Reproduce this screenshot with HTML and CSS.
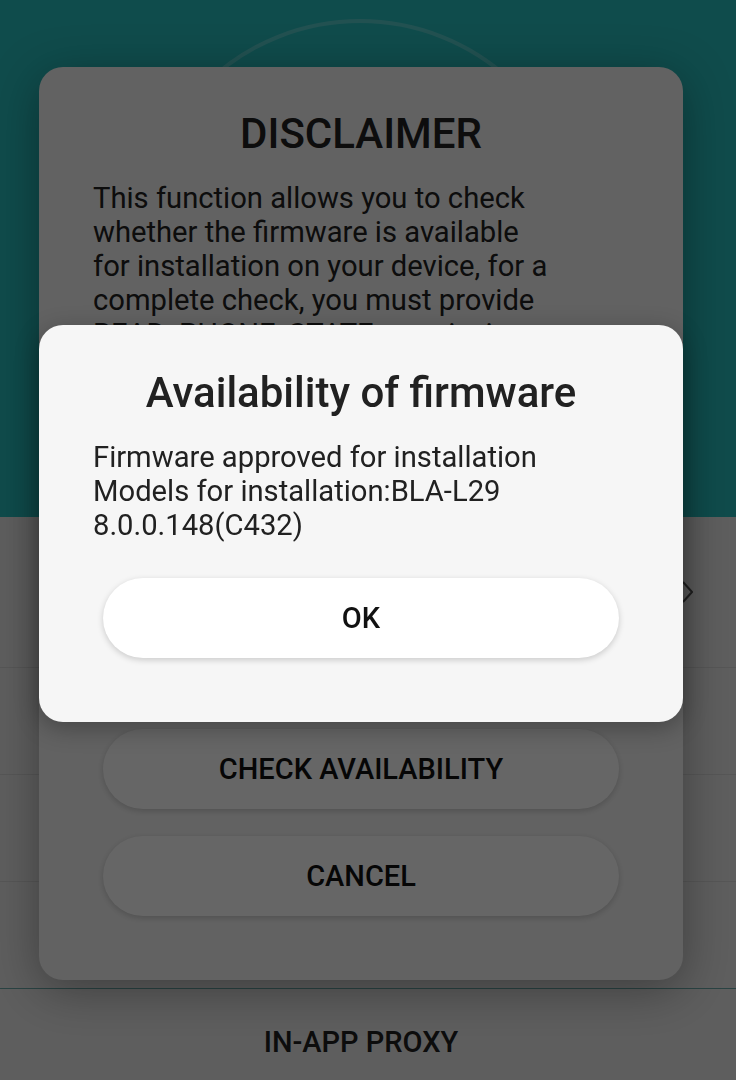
FILE: index.html
```html
<!DOCTYPE html>
<html lang="en">
<head>
  <meta charset="UTF-8">
  <title>Firmware Finder</title>
  <link rel="stylesheet" href="styles.css">
</head>
<body>
  <div class="app">
    <header class="hero"><div class="ring"></div></header>
    <ul class="menu">
      <li class="menu-item tall">
        <svg class="chev" width="12" height="22" viewBox="0 0 12 22"><path d="M2 1 L11 11 L2 21" fill="none" stroke="#555" stroke-width="2"/></svg>
      </li>
      <li class="menu-item"></li>
      <li class="menu-item"></li>
      <li class="menu-item last"></li>
    </ul>
    <div class="proxy">IN-APP PROXY</div>
  </div>

  <div class="sheet disclaimer">
    <h2>DISCLAIMER</h2>
    <p>This function allows you to check<br>whether the firmware is available<br>for installation on your device, for a<br>complete check, you must provide<br>READ_PHONE_STATE permission.</p>
    <div class="actions">
      <button class="pill">CHECK AVAILABILITY</button>
      <button class="pill">CANCEL</button>
    </div>
  </div>

  <div class="scrim"></div>

  <div class="sheet result">
    <h3>Availability of firmware</h3>
    <p>Firmware approved for installation<br>Models for installation:BLA-L29<br>8.0.0.148(C432)</p>
    <button class="pill">OK</button>
  </div>
</body>
</html>
```

FILE: styles.css
```css
body { margin: 0; width: 736px; height: 1080px; overflow: hidden; position: relative; background: #ebebeb; font-family: Roboto, "Noto Sans", sans-serif; color: #212121; }

.hero { height: 517px; background: #27bdbd; overflow: hidden; }
.ring { width: 446px; height: 446px; box-sizing: border-box; margin: 19px 0 0 137px; border: 4px solid rgba(255,255,255,0.22); border-radius: 50%; }

.menu { list-style: none; margin: 0; padding: 0; }
.menu-item { height: 106px; border-bottom: 1px solid #d8d8d8; display: flex; align-items: center; justify-content: flex-end; padding-right: 43px; }
.menu-item.tall { height: 150px; }
.menu-item.last { border-bottom-color: #6aa8a8; }

.proxy { padding: 36px 14px 0 0; text-align: center; font-size: 29px; font-weight: 500; line-height: 34px; }

.scrim { position: fixed; inset: 0; background: rgba(0,0,0,0.6); }

.sheet { position: absolute; left: 39px; width: 644px; box-sizing: border-box; padding: 0 54px; background: #f6f6f6; border-radius: 24px; display: flex; flex-direction: column; }
.sheet p { margin: 0; font-size: 29.2px; line-height: 34px; }

.disclaimer { top: 67px; height: 913px; padding-top: 43px; padding-bottom: 64px; background: #f5f5f5; box-shadow: 0 10px 48px rgba(0,0,0,0.35); }
.disclaimer h2 { margin: 0 0 23px; text-align: center; font-size: 42px; line-height: 48px; font-weight: 500; color: #222; }
.disclaimer .actions { margin-top: auto; display: flex; flex-direction: column; gap: 27px; }

.result { top: 325px; padding-top: 44px; padding-bottom: 64px; box-shadow: 0 6px 24px rgba(0,0,0,0.3); }
.result h3 { margin: 0 0 23px; text-align: center; font-size: 42px; line-height: 48px; font-weight: 500; }
.result .pill { margin-top: 36px; }

.pill { display: block; height: 80px; margin: 0 10px; border: 0; border-radius: 40px; background: #fff; box-shadow: 0 2px 6px rgba(0,0,0,0.18); font-family: inherit; font-size: 29px; font-weight: 500; color: #111; }
```
